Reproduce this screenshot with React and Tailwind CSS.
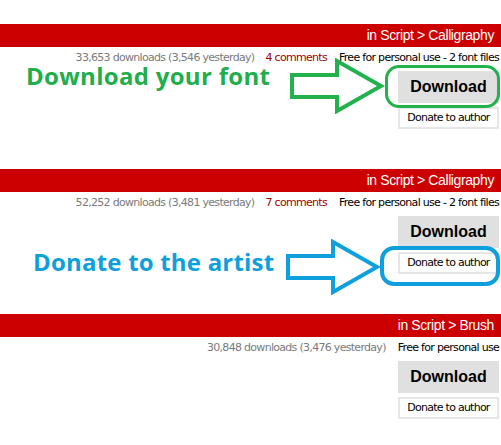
import React from 'react';

const fonts = [
  { cat: 'in Script > Calligraphy', downloads: '33,653 downloads (3,546 yesterday)', comments: '4 comments', license: 'Free for personal use - 2 font files' },
  { cat: 'in Script > Calligraphy', downloads: '52,252 downloads (3,481 yesterday)', comments: '7 comments', license: 'Free for personal use - 2 font files' },
  { cat: 'in Script > Brush', downloads: '30,848 downloads (3,476 yesterday)', comments: null, license: 'Free for personal use' },
];

function FontRow({ font }) {
  return (
    <div className="mb-[40px]">
      <div className="h-[23px] bg-[#cc0000] flex items-center justify-end pr-[7px]">
        <span className="text-white text-[14px] tracking-[-0.4px]" style={{ fontFamily: '"Liberation Sans", Arial, sans-serif' }}>{font.cat}</span>
      </div>
      <div className="h-[24px] flex items-start pt-[5px] justify-end pr-[2px] text-[11px] leading-[12px] tracking-[-0.7px]" style={{ fontFamily: '"DejaVu Sans", Verdana, sans-serif' }}>
        <span className="text-[#7a7a7a]">{font.downloads}</span>
        {font.comments && <span className="text-[#a00000] ml-[11px]">{font.comments}</span>}
        <span className="text-black ml-[12px]">{font.license}</span>
      </div>
      <div className="flex justify-end pr-[2px]">
        <div className="w-[101px] flex flex-col gap-[4px]">
          <button className="h-[32px] bg-[#e0e0e0] text-black font-bold text-[16px]" style={{ fontFamily: '"Liberation Sans", Arial, sans-serif' }}>Download</button>
          <button className="h-[22px] bg-white border-2 border-[#e6e6e6] text-black text-[11px] tracking-[-0.75px]" style={{ fontFamily: '"DejaVu Sans", Verdana, sans-serif' }}>Donate to author</button>
        </div>
      </div>
    </div>
  );
}

function Arrow({ color }) {
  return (
    <svg width="96" height="56" viewBox="0 0 96 56">
      <path d="M3 17 H48 V3 L92 28 L48 53 V39 H3 Z" fill="white" stroke={color} strokeWidth="4" strokeLinejoin="miter" />
    </svg>
  );
}

export default function App() {
  return (
    <div className="relative w-[501px] h-[445px] bg-white overflow-hidden pt-[24px]">
      {fonts.map((f, i) => <FontRow key={i} font={f} />)}

      {/* annotation: download */}
      <div className="absolute left-[26px] top-[64px] text-[#1fae4b] font-bold text-[24px] leading-none tracking-[0.3px]" style={{ fontFamily: '"Open Sans", sans-serif' }}>Download your font</div>
      <div className="absolute left-[289px] top-[58px]"><Arrow color="#22b14c" /></div>
      <div className="absolute left-[385px] top-[65px] w-[115px] h-[43px] border-[3px] border-[#22b14c] rounded-[14px]"></div>

      {/* annotation: donate */}
      <div className="absolute left-[33px] top-[250px] text-[#0ea0dc] font-bold text-[24px] leading-none tracking-[0.2px]" style={{ fontFamily: '"Open Sans", sans-serif' }}>Donate to the artist</div>
      <div className="absolute left-[285px] top-[239px]"><Arrow color="#0ea0dc" /></div>
      <div className="absolute left-[380px] top-[246px] w-[120px] h-[40px] border-[4px] border-[#0ea0dc] rounded-[14px]"></div>
    </div>
  );
}
